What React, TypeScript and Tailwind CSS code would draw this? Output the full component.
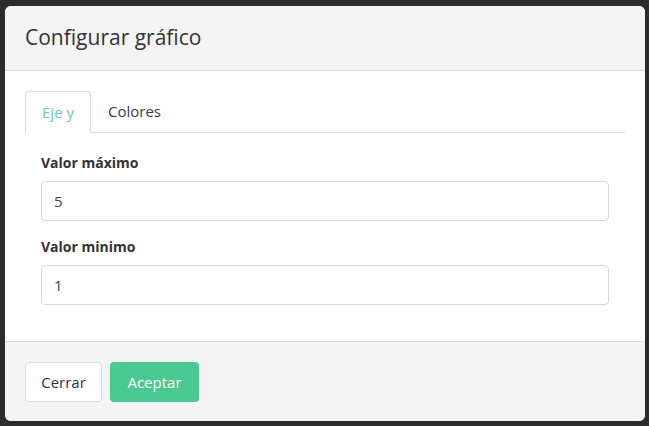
export default function App() {
  return (
    <div
      className="h-[426px] w-[649px] bg-[#2b2b2b] pl-[5px] pt-[6px]"
      style={{ fontFamily: '"Open Sans", sans-serif' }}
    >
      <div className="flex h-[415px] w-[640px] flex-col overflow-hidden rounded-md bg-white">
        <div className="flex h-[65px] items-center border-b border-[#dcdcdc] bg-[#f4f4f4] px-5 pb-px">
          <h1 className="text-[21px] text-[#333]">Configurar gráfico</h1>
        </div>

        <div className="flex-1 px-5 pt-5">
          <div className="flex border-b border-[#dddddd] text-[15px]">
            <div className="-mb-px flex h-[42px] w-[66px] items-center justify-center rounded-t border border-[#dddddd] border-b-white bg-white text-[#6ec4cf]">
              Eje y
            </div>
            <div className="flex h-[41px] items-center px-[17px] text-[#3a3a4a]">
              Colores
            </div>
          </div>

          <div className="px-4 pt-[19px]">
            <label className="block text-[14px] font-bold text-[#333]">Valor máximo</label>
            <div className="mt-[8px] flex h-[40px] items-center rounded border border-[#d9d9d9] px-[12px] text-[15px] text-[#444]">
              5
            </div>
            <label className="mt-[15px] block text-[14px] font-bold text-[#333]">Valor minimo</label>
            <div className="mt-[8px] flex h-[40px] items-center rounded border border-[#d9d9d9] px-[12px] text-[15px] text-[#444]">
              1
            </div>
          </div>
        </div>

        <div className="flex h-[80px] items-center gap-2 border-t border-[#dcdcdc] bg-[#f4f4f4] px-5 pt-px">
          <button
            type="button"
            className="h-[40px] w-[77px] rounded border border-[#dddddd] bg-white text-[15px] text-[#333]"
          >
            Cerrar
          </button>
          <button
            type="button"
            className="h-[40px] w-[89px] rounded bg-[#4ac990] text-[15px] text-white"
          >
            Aceptar
          </button>
        </div>
      </div>
    </div>
  );
}
